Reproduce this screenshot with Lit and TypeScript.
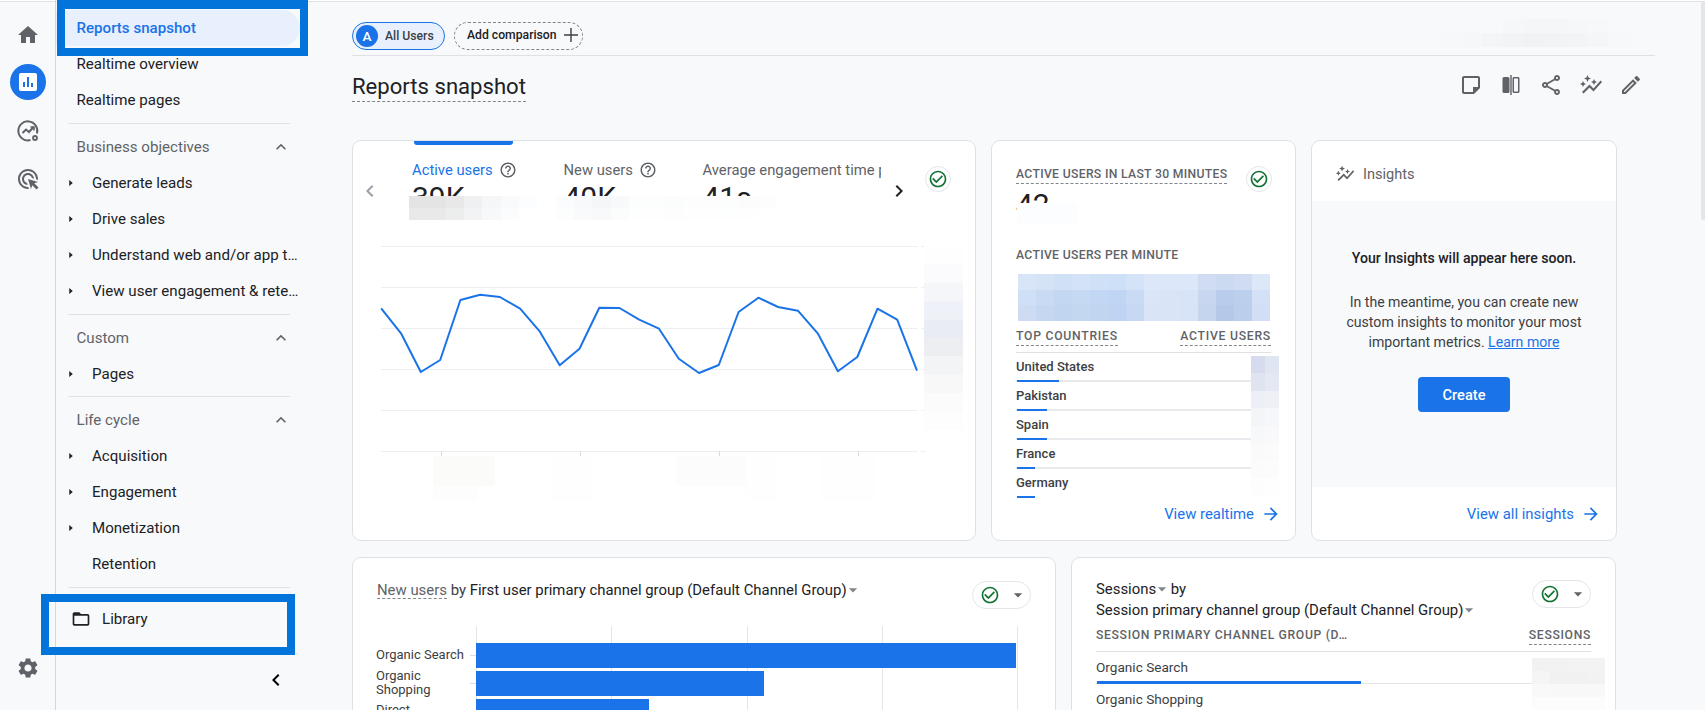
import { LitElement, html, css, svg } from "lit";
import { customElement } from "lit/decorators.js";

const P = {
  home: "M10 20v-6h4v6h5v-8h3L12 3 2 12h3v8z",
  click: "M11.71,17.99C8.53,17.84,6,15.22,6,12c0-3.31,2.69-6,6-6c3.22,0,5.84,2.53,5.99,5.71l-2.1-0.63C15.48,9.31,13.89,8,12,8 c-2.21,0-4,1.79-4,4c0,1.89,1.31,3.48,3.08,3.89L11.71,17.99z M22,12c0,0.3-0.01,0.6-0.04,0.9l-1.97-0.59C20,12.21,20,12.1,20,12 c0-4.42-3.58-8-8-8s-8,3.58-8,8s3.58,8,8,8c0.1,0,0.21,0,0.31-0.01l0.59,1.97C12.6,21.99,12.3,22,12,22C6.48,22,2,17.52,2,12 C2,6.48,6.48,2,12,2S22,6.48,22,12z M18.23,16.26L22,15l-10-3l3,10l1.26-3.77l4.27,4.27l1.98-1.98L18.23,16.26z",
  gear: "M19.14 12.94c.04-.3.06-.61.06-.94 0-.32-.02-.64-.07-.94l2.03-1.58c.18-.14.23-.41.12-.61l-1.92-3.32c-.12-.22-.37-.29-.59-.22l-2.39.96c-.5-.38-1.03-.7-1.62-.94l-.36-2.54c-.04-.24-.24-.41-.48-.41h-3.84c-.24 0-.43.17-.47.41l-.36 2.54c-.59.24-1.13.57-1.62.94l-2.39-.96c-.22-.08-.47 0-.59.22L2.74 8.87c-.12.21-.08.47.12.61l2.03 1.58c-.05.3-.09.63-.09.94s.02.64.07.94l-2.03 1.58c-.18.14-.23.41-.12.61l1.92 3.32c.12.22.37.29.59.22l2.39-.96c.5.38 1.03.7 1.62.94l.36 2.54c.05.24.24.41.48.41h3.84c.24 0 .44-.17.47-.41l.36-2.54c.59-.24 1.13-.56 1.62-.94l2.39.96c.22.08.47 0 .59-.22l1.92-3.32c.12-.22.07-.47-.12-.61l-2.01-1.58zM12 15.6c-1.98 0-3.6-1.62-3.6-3.6s1.62-3.6 3.6-3.6 3.6 1.62 3.6 3.6-1.62 3.6-3.6 3.6z",
  folder: "M20 6h-8l-2-2H4c-1.1 0-1.99.9-1.99 2L2 18c0 1.1.9 2 2 2h16c1.1 0 2-.9 2-2V8c0-1.1-.9-2-2-2zm0 12H4V8h16v10z",
  share: "M18 16.08c-.76 0-1.44.3-1.96.77L8.91 12.7c.05-.23.09-.46.09-.7s-.04-.47-.09-.7l7.05-4.11c.54.5 1.25.81 2.04.81 1.66 0 3-1.34 3-3s-1.34-3-3-3-3 1.34-3 3c0 .24.04.47.09.7L8.04 9.81C7.5 9.31 6.79 9 6 9c-1.66 0-3 1.34-3 3s1.34 3 3 3c.79 0 1.5-.31 2.04-.81l7.12 4.16c-.05.21-.08.43-.08.65 0 1.61 1.31 2.92 2.92 2.92 1.61 0 2.92-1.31 2.92-2.92s-1.31-2.92-2.92-2.92zM18 4c.55 0 1 .45 1 1s-.45 1-1 1-1-.45-1-1 .45-1 1-1zM6 13c-.55 0-1-.45-1-1s.45-1 1-1 1 .45 1 1-.45 1-1 1zm12 7.02c-.55 0-1-.45-1-1s.45-1 1-1 1 .45 1 1-.45 1-1 1z",
  edit: "M14.06 9.02l.92.92L5.92 19H5v-.92l9.06-9.06M17.66 3c-.25 0-.51.1-.7.29l-1.83 1.83 3.75 3.75 1.83-1.83c.39-.39.39-1.02 0-1.41l-2.34-2.34c-.2-.2-.45-.29-.71-.29zm-3.6 3.19L3 17.25V21h3.75L17.81 9.94l-3.75-3.75z",
  note: "M19 5v9h-5v5H5V5h14m0-2H5c-1.1 0-2 .9-2 2v14c0 1.1.9 2 2 2h10l6-6V5c0-1.1-.9-2-2-2z",
  spark: "M14.06,9.94L12,9l2.06-0.94L15,6l0.94,2.06L18,9l-2.06,0.94L15,12L14.06,9.94z M4,14l0.94-2.06L7,11l-2.06-0.94L4,8l-0.94,2.06L1,11 l2.06,0.94L4,14z M8.5,9l1.09-2.41L12,5.5L9.59,4.41L8.5,2L7.41,4.41L5,5.5l2.41,1.09L8.5,9z M4.5,20.5l6-6.01l4,4L23,8.93l-1.41-1.41 l-7.09,7.97l-4-4L3,19L4.5,20.5z",
  help: "M11 18h2v-2h-2v2zm1-16C6.48 2 2 6.48 2 12s4.48 10 10 10 10-4.48 10-10S17.52 2 12 2zm0 18c-4.41 0-8-3.59-8-8s3.59-8 8-8 8 3.59 8 8-3.59 8-8 8zm0-14c-2.21 0-4 1.79-4 4h2c0-1.1.9-2 2-2s2 .9 2 2c0 2-3 1.75-3 5h2c0-2.25 3-2.5 3-5 0-2.21-1.79-4-4-4z",
  check: "M16.59 7.58L10 14.17l-3.59-3.58L5 12l5 5 8-8zM12 2C6.48 2 2 6.48 2 12s4.48 10 10 10 10-4.48 10-10S17.52 2 12 2zm0 18c-4.42 0-8-3.58-8-8s3.58-8 8-8 8 3.58 8 8-3.58 8-8 8z",
  up: "M12 8l-6 6 1.41 1.41L12 10.83l4.59 4.58L18 14z",
  left: "M15.41 7.41L14 6l-6 6 6 6 1.41-1.41L10.83 12z",
  right: "M10 6L8.59 7.41 13.17 12l-4.58 4.59L10 18l6-6z",
  arrow: "M12 4l-1.41 1.41L16.17 11H4v2h12.17l-5.58 5.59L12 20l8-8z",
  caret: "M9 17l6-5-6-5v10z",
  drop: "M7 10l5 5 5-5z",
  add: "M19 12.7h-6.3V19h-1.4v-6.3H5v-1.4h6.3V5h1.4v6.3H19z",
};

const icon = (d: string, size: number, color = "#5f6368") => html`<svg class="ico" width=${size} height=${size} viewBox="0 0 24 24" fill=${color}><path d=${d}></path></svg>`;

const patch = (rows: string[][], w: number, h: number) => html`${rows.map((r) => html`<div class="prow">${r.map((c) => html`<div style="width:${w}px;height:${h}px;background:#${c}"></div>`)}</div>`)}`;

const line = [[98,265],[145,340],[192,456],[238,420],[286,240],[333,224],[380,231],[428,266],[475,335],[522,436],[569,386],[616,263],[664,264],[711,299],[758,326],[805,416],[853,459],[900,435],[947,276],[994,233],[1041,261],[1088,272],[1135,340],[1183,454],[1229,411],[1277,266],[1324,299],[1371,452]]
  .map(([x, y]) => `${(340 + x / 2.376).toFixed(1)},${(220 + y / 3).toFixed(1)}`).join(" ");

const gridY = [246, 287, 328, 369, 410, 451];

const sideBlur = ["fefefe", "fbfbfd", "f5f6fa", "eef1f7", "e9ecf2", "eceef2", "f3f4f5", "f8f8f8", "fbfbfb", "fdfdfd"];
const dateBlur: [number, number, number, number, string][] = [
  [433, 456, 62, 30, "fbfbfa"], [433, 486, 45, 15, "fdfdfd"], [552, 456, 40, 45, "fefefe"],
  [676, 456, 70, 30, "fcfcfc"], [746, 456, 30, 45, "fefefe"], [820, 456, 56, 45, "fefefe"],
];

const metricsBlur = [
  ["e4e4e4","e4e4e4","e8e8e8","eef0f1","f4f6f8","f8fafc","fcfdfe","ffffff","fbfcfd","f7f9fa","f4f6f7","f8f9fb","fcfdfd","fcfdfd","fbfcfc","fdfdfd","fdfdfe","fcfdfd","fcfcfd","fdfdfd"],
  ["e9e9e9","e9e9e9","eceded","f1f3f4","f6f8f9","fbfcfd","ffffff","ffffff","fcfdfd","f9fafb","f8f9fa","fbfcfc","fdfefe","fefefe","fdfdfd","fefefe","fefefe","fdfefe","fefefe","ffffff"],
];

const minuteBlur = [
  ["d8e5f8","d5e3f7","d0e0f7","d3e2f7","cfe0f7","cde0f7","d5e3f8","dce8f9","dce8f9","dce8f9","cfdcf2","cbd9f1","cfdcf2","dce7f8"],
  ["cfdff5","c9daf3","c3d7f2","c6d9f3","c2d7f3","bfd5f3","c8daf4","dae6f7","d9e5f7","d7e3f6","c8d7ef","b9cceb","bccfec","d3e0f6"],
  ["cddcf3","c6d7f1","c1d4f0","c4d7f1","c1d5f1","bed4f2","c6d8f3","d9e5f7","d9e5f7","d7e3f6","c6d5ee","b5c8e8","bbceeb","d1def5"],
];

const countryBlur = [
  ["d6dcee","dfe5f1"],["dfe4f0","e4e8f2"],["eceff6","eef0f6"],["f4f5f9","f6f7fa"],["f7f8fa","f9f9fb"],["fafafb","fbfbfb"],["fbfbfb","fcfcfc"],["fdfdfd","fefefe"],
];

const sessionBlur = [
  ["f2f2f2","f2f2f2","f3f3f3","f3f3f3"],["f5f5f5","f1f1f1","f1f1f1","f2f2f2"],["f9f9f9","f8f8f8","f8f8f8","f8f8f8"],["fcfcfc","fcfcfc","fcfcfc","fcfcfc"],
];

const topBlur = [
  ["f8f9fb","f8f9fb","f8f9fb","f6f7f9","f5f6f8","f5f6f8","f6f7f9","f7f8fa","f8f9fb","f8f9fb"],
  ["f7f8fa","f6f7f9","f4f5f7","f2f3f5","f1f2f4","f2f3f5","f3f4f6","f5f6f8","f7f8fa","f8f9fa"],
];

const section1 = ["Generate leads", "Drive sales", "Understand web and/or app traffic", "View user engagement & retention"];
const section3 = ["Acquisition", "Engagement", "Monetization"];

const countries: [string, number][] = [["United States", 42], ["Pakistan", 30], ["Spain", 30], ["France", 18], ["Germany", 18]];

@customElement("app-root")
export class AppRoot extends LitElement {
  static styles = css`
    :host {
      display: block;
      height: 719px;
      background: #fff;
      font-family: Roboto, "Liberation Sans", sans-serif;
      color: #202124;
    }
    * { box-sizing: border-box; }
    .ico { display: block; flex: none; }

    .shell {
      position: relative;
      display: flex;
      height: 710px;
      overflow: hidden;
      box-shadow: inset 0 1px 0 #fff, inset 0 2px 0 #dfe1e5;
      background: #f8f9fb;
    }

    .rail {
      width: 56px;
      flex: none;
      display: flex;
      flex-direction: column;
      align-items: center;
      padding: 11px 0 18px;
      border-right: 1px solid #d5d7da;
    }
    .rail-item {
      width: 48px;
      height: 48px;
      display: flex;
      align-items: center;
      justify-content: center;
    }
    .rail-item.bottom { margin-top: auto; }
    .rail-on {
      width: 36px;
      height: 36px;
      margin-top: -2px;
      border-radius: 50%;
      background: #1a73e8;
      display: flex;
      align-items: center;
      justify-content: center;
    }

    .nav {
      width: 296px;
      flex: none;
      padding-top: 10px;
      font-size: 15.1px;
    }
    .divider { height: 1px; background: #e0e2e6; margin: 4.9px 62px 4.9px 12px; }
    .divider.wide { margin-top: 16px; margin-right: 54px; }
    .row {
      height: 36px;
      display: flex;
      align-items: center;
      padding-left: 20.5px;
      white-space: nowrap;
    }
    .row.active {
      width: 244px;
      background: #e8f0fe;
      border-radius: 0 18px 18px 0;
      color: #1a73e8;
      font-weight: 500;
    }
    .row.head { color: #5f6368; justify-content: space-between; padding-right: 61px; }
    .row.child { padding-left: 8px; }
    .caret-box { width: 14px; margin-right: 14px; flex: none; }
    .row.child .label {
      max-width: 207px;
      overflow: hidden;
      text-overflow: ellipsis;
    }
    .row.lib { padding-left: 15px; gap: 11px; margin-top: 13px; }
    .collapse { display: flex; justify-content: flex-end; padding: 9px 64px 0 0; }

    .mark {
      position: absolute;
      border: 8px solid #0274da;
      pointer-events: none;
    }
    .mark.a { left: 57px; top: 0; width: 251px; height: 56px; border-top-width: 9px; }
    .mark.b { left: 41px; top: 594px; width: 254px; height: 61px; }

    .main { flex: 1; min-width: 0; position: relative; }
    .chips-bar {
      width: 1303px;
      height: 34px;
      margin-top: 22px;
      display: flex;
      gap: 9px;
      border-bottom: 1px solid #dfe1e5;
      padding-bottom: 5px;
    }
    .chip {
      height: 28px;
      border-radius: 14px;
      display: flex;
      align-items: center;
      font-size: 12.2px;
      white-space: nowrap;
    }
    .chip.on {
      width: 93px;
      background: #e8f0fe;
      border: 1px solid #1a73e8;
      padding-left: 3px;
      gap: 7px;
      color: #3c4043;
      font-weight: 500;
    }
    .avatar {
      width: 22px;
      height: 22px;
      border-radius: 50%;
      background: #1a73e8;
      color: #fff;
      font-size: 13.5px;
      font-weight: 500;
      display: flex;
      align-items: center;
      justify-content: center;
    }
    .chip.add {
      width: 129px;
      border: 1px dashed #80868b;
      padding: 0 0 2px 12px;
      gap: 2px;
      font-weight: 500;
    }
    .title-bar {
      width: 1303px;
      height: 84px;
      display: flex;
      justify-content: space-between;
      align-items: flex-start;
      padding: 15.5px 12px 0 0;
    }
    .title {
      font-size: 22.1px;
      line-height: 29px;
      height: 30px;
      border-bottom: 1.5px dashed #80868b;
    }
    .actions { display: flex; gap: 16px; padding-top: 1.5px; }

    .cards-1 {
      display: grid;
      grid-template-columns: 624px 305px 306px;
      grid-template-rows: 401px;
      column-gap: 15px;
    }
    .cards-2 {
      display: grid;
      grid-template-columns: 704px 545px;
      grid-template-rows: 300px;
      column-gap: 15px;
      margin-top: 16px;
    }
    .card {
      position: relative;
      background: #fff;
      border: 1px solid #dfe1e5;
      border-radius: 9px;
      overflow: hidden;
    }
    .pix { position: absolute; }
    .pix.top { left: 1088px; top: 19px; }
    .pix.metrics { left: 56px; top: 55px; }
    .pix.live { left: 25px; top: 62px; width: 60px; height: 22px; background: #fcfdfe; }
    .pix.country { left: 259px; top: 215px; }
    .pix.sess { left: 460px; top: 100px; }
    .prow { display: flex; }
    .badge {
      width: 26px;
      height: 26px;
      flex: none;
      border: 1px solid #e3e5e8;
      border-radius: 50%;
      display: flex;
      align-items: center;
      justify-content: center;
      background: #fff;
    }

    /* overview */
    .tab-mark {
      position: absolute;
      left: 61px;
      top: 0;
      width: 99px;
      height: 4px;
      background: #1a73e8;
      border-radius: 0 0 3px 3px;
    }
    .tabs-row { display: flex; height: 80px; }
    .tabs-arrow { margin-top: 38px; flex: none; }
    .tabs-arrow.l { margin-left: 5px; margin-right: 30px; }
    .tabs-arrow.r { margin-left: 6px; margin-right: 14px; }
    .tabs-row .badge { margin-top: 25px; }
    .strip { width: 469px; display: flex; overflow: hidden; }
    .tab { flex: none; padding-top: 19px; }
    .tab.one { width: 151.5px; }
    .tab.two { width: 139px; }
    .tab .lab {
      display: flex;
      align-items: center;
      gap: 6px;
      height: 20px;
      font-size: 14.8px;
      color: #5f6368;
      white-space: nowrap;
    }
    .tab.one .lab { color: #1a73e8; }
    .tab .num { font-size: 30px; line-height: 36px; color: #202124; }
    .chart { display: block; }

    /* realtime */
    .rt { padding: 24px 24px 0; }
    .cap {
      font-size: 12.2px;
      font-weight: 500;
      letter-spacing: 0.32px;
      line-height: 18px;
      color: #5f6368;
      white-space: nowrap;
    }
    .dash { border-bottom: 1px dashed #80868b; }
    .rt-head { display: flex; justify-content: space-between; height: 19px; margin-right: -1px; }
    .rt-head .badge { margin-top: 1px; }
    .rt-head .cap.dash { height: 19px; }
    .rt-num { font-size: 30px; line-height: 36px; margin-top: 3px; height: 36px; }
    .rt-sub { margin-top: 23px; }
    .spark { height: 47px; margin: 10px 0 0 2px; }
    .rt-cols {
      display: flex;
      justify-content: space-between;
      margin-top: 6px;
      padding-bottom: 6px;
      border-bottom: 1px solid #dfe1e5;
    }
    .rt-cols .cap { letter-spacing: 0.75px; height: 19px; }
    .c-row {
      position: relative;
      height: 29px;
      padding-top: 5px;
      font-size: 13px;
      line-height: 18px;
      color: #3c4043;
      font-weight: 500;
      box-shadow: inset 0 -2px 0 #e8eaed;
    }
    .c-row.last { box-shadow: none; }
    .c-bar {
      position: absolute;
      left: 1px;
      bottom: 0;
      height: 2px;
      background: #1a73e8;
    }
    .more {
      display: flex;
      justify-content: flex-end;
      align-items: center;
      gap: 7px;
      height: 20px;
      font-size: 14.9px;
      color: #1a73e8;
      white-space: nowrap;
    }
    .rt .more { margin: 6px -10px 0 0; }

    /* insights */
    .ins { display: flex; flex-direction: column; }
    .ins-head {
      height: 60px;
      flex: none;
      display: flex;
      align-items: center;
      padding: 6px 0 0 23px;
      gap: 8px;
      font-size: 14.6px;
      color: #5f6368;
    }
    .ins-body {
      flex: 1;
      background: #f8f9fb;
      padding-top: 47px;
      display: flex;
      flex-direction: column;
      align-items: center;
      text-align: center;
      font-size: 14.1px;
      line-height: 20px;
      color: #3c4043;
    }
    .ins-body b { font-weight: 500; color: #202124; }
    .ins-body p { margin: 24px 0 0; }
    .ins-body a { color: #1a73e8; text-decoration: underline; }
    .btn {
      width: 92px;
      height: 35px;
      margin-top: 25px;
      border-radius: 4px;
      background: #1a73e8;
      color: #fff;
      font-weight: 500;
      font-size: 14.6px;
      display: flex;
      align-items: center;
      justify-content: center;
    }
    .ins-foot {
      height: 53px;
      flex: none;
      display: flex;
      align-items: center;
      justify-content: flex-end;
      padding-right: 15px;
    }

    /* bottom row */
    .low-head {
      display: flex;
      justify-content: space-between;
      align-items: flex-start;
      padding: 22px 24px 0;
      height: 68px;
    }
    .low-title {
      font-size: 14.9px;
      line-height: 20px;
      color: #202124;
      white-space: nowrap;
    }
    .low-title .sub { color: #3c4043; }
    .low-title .u { border-bottom: 1px dashed #80868b; color: #5f6368; display: inline-block; height: 19px; }
    .tri { display: inline-block; vertical-align: -5px; margin: 0 -5px 0 -4px; }
    .pill {
      height: 28px;
      width: 59px;
      margin-top: 1px;
      flex: none;
      border: 1px solid #e3e5e8;
      border-radius: 14px;
      display: flex;
      align-items: center;
      padding-left: 7px;
      gap: 8px;
      background: #fff;
    }
    .sess-head { padding-top: 21px; height: 65px; }
    .sess-head .low-title { line-height: 21px; }
    .sess-table { padding: 0 24px; }
    .sess-cols {
      display: flex;
      justify-content: space-between;
      padding-bottom: 6px;
      border-bottom: 1px solid #dfe1e5;
      margin-top: 3px;
    }
    .sess-cols .cap { letter-spacing: 0.66px; height: 19px; }
    .s-row {
      position: relative;
      height: 32px;
      padding-top: 6px;
      font-size: 13.6px;
      line-height: 18px;
      color: #3c4043;
      box-shadow: inset 0 -1px 0 #e3e5e8;
    }
    .s-row .c-bar { height: 3px; }

    .thumb {
      position: absolute;
      right: 0;
      top: 2px;
      width: 4px;
      height: 218px;
      background: #e3e5e8;
      border-radius: 2px 0 0 2px;
    }
  `;

  private renderChart() {
    return svg`
      <svg class="chart" width="622" height="320" viewBox="353 221 622 320">
        ${gridY.map((y) => svg`<line x1="381" x2="917.5" y1=${y + 0.5} y2=${y + 0.5} stroke="#eceef0"></line><line x1="921" x2=${y === 246 ? 951 : 925} y1=${y + 0.5} y2=${y + 0.5} stroke="#eceef0"></line>`)}
        ${[441, 580, 719, 858].map((x) => svg`<line x1=${x + 0.5} x2=${x + 0.5} y1="451" y2="456" stroke="#dadce0"></line>`)}
        ${dateBlur.map(([x, y, w, h, c]) => svg`<rect x=${x} y=${y} width=${w} height=${h} fill="#${c}"></rect>`)}
        ${sideBlur.map((c, i) => svg`<rect x="924" y=${246 + i * 18.4} width="39" height="18.4" fill="#${c}"></rect>`)}
        <polyline points=${line} fill="none" stroke="#1a73e8" stroke-width="2" stroke-linejoin="round"></polyline>
      </svg>
    `;
  }

  private renderBars() {
    return svg`
      <svg class="chart" width="702" height="90" viewBox="353 626 702 90" font-size="13" fill="#3c4043" font-family="Roboto, sans-serif">
        ${[476, 611, 747, 882, 1017].map((x) => svg`<line x1=${x + 0.5} x2=${x + 0.5} y1="626" y2="716" stroke="#e3e5e8"></line>`)}
        <line x1="470" x2="476" y1="655.5" y2="655.5" stroke="#dadce0"></line>
        <line x1="470" x2="476" y1="683.5" y2="683.5" stroke="#dadce0"></line>
        <rect x="476" y="643" width="540" height="25" fill="#1a73e8"></rect>
        <rect x="476" y="671" width="288" height="25" fill="#1a73e8"></rect>
        <rect x="476" y="699" width="173" height="25" fill="#1a73e8"></rect>
        <text x="376" y="658.5">Organic Search</text>
        <text x="376" y="679.5">Organic</text>
        <text x="376" y="693.5">Shopping</text>
        <text x="376" y="714">Direct</text>
      </svg>
    `;
  }

  render() {
    const tri = html`<svg class="tri" width="20" height="20" viewBox="0 0 24 24" fill="#80868b"><path d=${P.drop}></path></svg>`;
    return html`
      <div class="shell">
        <div class="rail">
          <div class="rail-item">${icon(P.home, 24)}</div>
          <div class="rail-item">
            <div class="rail-on">
              <svg width="24" height="24" viewBox="0 0 24 24">
                <rect x="3" y="3" width="18" height="18" rx="2" fill="#fff"></rect>
                <rect x="7" y="12" width="2" height="5" fill="#1a73e8"></rect>
                <rect x="11" y="7" width="2" height="10" fill="#1a73e8"></rect>
                <rect x="15" y="13" width="2" height="4" fill="#1a73e8"></rect>
              </svg>
            </div>
          </div>
          <div class="rail-item">
            <svg width="24" height="24" viewBox="0 0 24 24" fill="none" stroke="#5f6368" stroke-width="2">
              <path d="M21 14.5A9.500 9.500 0 1 0 14.500 21"></path>
              <path d="M6.500 14l3.500-3.500 3 2.500 4.500-5"></path>
              <path d="M14.500 8h3.500v3.500" stroke-width="1.600"></path>
              <circle cx="19" cy="19" r="2" stroke-width="1.800"></circle>
            </svg>
          </div>
          <div class="rail-item">${icon(P.click, 24)}</div>
          <div class="rail-item bottom">${icon(P.gear, 24)}</div>
        </div>

        <div class="nav">
          <div class="row active">Reports snapshot</div>
          <div class="row">Realtime overview</div>
          <div class="row">Realtime pages</div>
          <div class="divider"></div>
          <div class="row head">Business objectives ${icon(P.up, 20)}</div>
          ${section1.map((s) => html`<div class="row child"><span class="caret-box">${icon(P.caret, 14, "#202124")}</span><span class="label">${s}</span></div>`)}
          <div class="divider"></div>
          <div class="row head">Custom ${icon(P.up, 20)}</div>
          <div class="row child"><span class="caret-box">${icon(P.caret, 14, "#202124")}</span><span class="label">Pages</span></div>
          <div class="divider"></div>
          <div class="row head">Life cycle ${icon(P.up, 20)}</div>
          ${section3.map((s) => html`<div class="row child"><span class="caret-box">${icon(P.caret, 14, "#202124")}</span><span class="label">${s}</span></div>`)}
          <div class="row child"><span class="caret-box"></span><span class="label">Retention</span></div>
          <div class="divider"></div>
          <div class="row lib">${icon(P.folder, 20, "#202124")} Library</div>
          <div class="divider wide"></div>
          <div class="collapse">${icon(P.left, 24, "#000")}</div>
        </div>

        <div class="main">
          <div class="chips-bar">
            <div class="chip on"><span class="avatar">A</span>All Users</div>
            <div class="chip add">Add comparison ${icon(P.add, 24, "#3c4043")}</div>
          </div>
          <div class="pix top">${patch(topBlur, 21, 14)}</div>
          <div class="title-bar">
            <div class="title">Reports snapshot</div>
            <div class="actions">
              ${icon(P.note, 24)}
              <svg width="24" height="24" viewBox="0 0 24 24" fill="#5f6368">
                <rect x="3.500" y="4" width="7" height="16" rx="1.500"></rect>
                <rect x="11.300" y="2" width="1.400" height="20"></rect>
                <path d="M15 4h4c.8 0 1.500.7 1.500 1.500v13c0 .8-.7 1.500-1.500 1.500h-4c-.8 0-1.500-.7-1.500-1.500v-13C13.500 4.700 14.200 4 15 4zm0 1.500v13h4v-13z"></path>
              </svg>
              ${icon(P.share, 24)}
              ${icon(P.spark, 24)}
              ${icon(P.edit, 24)}
            </div>
          </div>

          <div class="cards-1">
            <div class="card">
              <div class="tab-mark"></div>
              <div class="tabs-row">
                <div class="tabs-arrow l">${icon(P.left, 24, "#9aa0a6")}</div>
                <div class="strip">
                  <div class="tab one">
                    <div class="lab">Active users ${icon(P.help, 18)}</div>
                    <div class="num">39K</div>
                  </div>
                  <div class="tab two">
                    <div class="lab">New users ${icon(P.help, 18)}</div>
                    <div class="num">40K</div>
                  </div>
                  <div class="tab">
                    <div class="lab">Average engagement time per active user</div>
                    <div class="num">41s</div>
                  </div>
                </div>
                <div class="tabs-arrow r">${icon(P.right, 24, "#202124")}</div>
                <div class="badge">${icon(P.check, 20, "#137333")}</div>
              </div>
              <div class="pix metrics">${patch(metricsBlur, 18.35, 12)}</div>
              ${this.renderChart()}
            </div>

            <div class="card rt">
              <div class="rt-head">
                <div class="cap dash">ACTIVE USERS IN LAST 30 MINUTES</div>
                <div class="badge">${icon(P.check, 20, "#137333")}</div>
              </div>
              <div class="rt-num">42</div>
              <div class="pix live"></div>
              <div class="cap rt-sub">ACTIVE USERS PER MINUTE</div>
              <div class="spark">${patch(minuteBlur, 18, 15.67)}</div>
              <div class="rt-cols">
                <div class="cap dash">TOP COUNTRIES</div>
                <div class="cap dash">ACTIVE USERS</div>
              </div>
              ${countries.map(([name, w], i) => html`
                <div class="c-row ${i === 4 ? "last" : ""}">${name}<div class="c-bar" style="width:${w}px"></div></div>
              `)}
              <div class="pix country">${patch(countryBlur, 14, 17.4)}</div>
              <div class="more">View realtime ${icon(P.arrow, 20, "#1a73e8")}</div>
            </div>

            <div class="card ins">
              <div class="ins-head">${icon(P.spark, 20)} Insights</div>
              <div class="ins-body">
                <b>Your Insights will appear here soon.</b>
                <p>In the meantime, you can create new<br />custom insights to monitor your most<br />important metrics. <a>Learn more</a></p>
                <div class="btn">Create</div>
              </div>
              <div class="ins-foot">
                <div class="more">View all insights ${icon(P.arrow, 20, "#1a73e8")}</div>
              </div>
            </div>
          </div>

          <div class="cards-2">
            <div class="card">
              <div class="low-head">
                <div class="low-title"><span class="u">New users</span> <span class="sub">by</span> First user primary channel group (Default Channel Group)${tri}</div>
                <div class="pill">${icon(P.check, 20, "#137333")}${icon(P.drop, 20)}</div>
              </div>
              ${this.renderBars()}
            </div>
            <div class="card">
              <div class="low-head sess-head">
                <div class="low-title">Sessions${tri} by<br />Session primary channel group (Default Channel Group)${tri}</div>
                <div class="pill">${icon(P.check, 20, "#137333")}${icon(P.drop, 20)}</div>
              </div>
              <div class="sess-table">
                <div class="sess-cols">
                  <div class="cap">SESSION PRIMARY CHANNEL GROUP (D…</div>
                  <div class="cap dash">SESSIONS</div>
                </div>
                <div class="s-row">Organic Search<div class="c-bar" style="width:264px"></div></div>
                <div class="s-row">Organic Shopping</div>
              </div>
              <div class="pix sess">${patch(sessionBlur, 18.25, 13)}</div>
            </div>
          </div>
        </div>

        <div class="mark a"></div>
        <div class="mark b"></div>
        <div class="thumb"></div>
      </div>
    `;
  }
}
